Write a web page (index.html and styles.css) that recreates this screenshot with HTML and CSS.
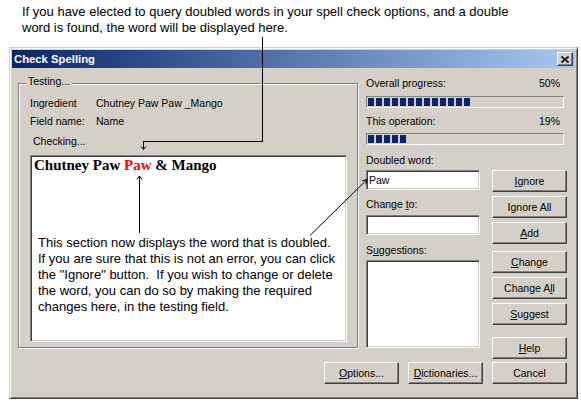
FILE: index.html
```html
<!DOCTYPE html>
<html>
<head>
<meta charset="utf-8">
<title>Check Spelling</title>
<link rel="stylesheet" href="styles.css">
</head>
<body>
<div class="page">
  <p class="note-top">If you have elected to query doubled words in your spell check options, and a double<br>word is found, the word will be displayed here.</p>

  <div class="dialog">
    <div class="titlebar">
      <span class="title">Check Spelling</span>
      <span class="close"><svg width="8" height="7" viewBox="0 0 8 7"><path d="M0.5 0.5 L7.5 6.5 M7.5 0.5 L0.5 6.5" stroke="#000" stroke-width="1.6" fill="none"/></svg></span>
    </div>
    <div class="body">
      <div class="main">
        <div class="group">
          <span class="group-label">Testing...</span>
          <div class="info"><span class="k">Ingredient</span><span>Chutney Paw Paw _Mango</span></div>
          <div class="info info2"><span class="k">Field name:</span><span>Name</span></div>
          <div class="checking">Checking...</div>
          <div class="testbox">
            <div class="phrase">Chutney Paw <span class="dup">Paw</span> &amp; Mango</div>
            <p class="note-box">This section now displays the word that is doubled.<br>If you are sure that this is not an error, you can click<br>the "Ignore" button.&nbsp; If you wish to change or delete<br>the word, you can do so by making the required<br>changes here, in the testing field.</p>
          </div>
        </div>

        <div class="right">
          <div class="row"><span>Overall progress:</span><span>50%</span></div>
          <div class="bar"><i></i><i></i><i></i><i></i><i></i><i></i><i></i><i></i><i></i><i></i><i></i><i></i><i></i></div>
          <div class="row row2"><span>This operation:</span><span>19%</span></div>
          <div class="bar bar2"><i></i><i></i><i></i><i></i><i></i></div>
          <div class="lower">
            <div class="fields">
              <div class="lbl">Doubled word:</div>
              <div class="field">Paw</div>
              <div class="lbl lbl-gap">Change <u>t</u>o:</div>
              <div class="field field2"></div>
              <div class="lbl lbl-gap2">S<u>u</u>ggestions:</div>
              <div class="list"></div>
            </div>
            <div class="btns">
              <button class="btn"><span><u>I</u>gnore</span></button>
              <button class="btn g4">I<u>g</u>nore All</button>
              <button class="btn g4"><span><u>A</u>dd</span></button>
              <button class="btn g7"><span><u>C</u>hange</span></button>
              <button class="btn g4">Change A<u>l</u>l</button>
              <button class="btn g4"><span><u>S</u>uggest</span></button>
              <button class="btn g12"><span><u>H</u>elp</span></button>
            </div>
          </div>
        </div>
      </div>
      <div class="bottom">
        <button class="btn"><span><u>O</u>ptions...</span></button>
        <button class="btn"><span><u>D</u>ictionaries...</span></button>
        <button class="btn">Cancel</button>
      </div>
    </div>
  </div>

  <svg class="arrows" width="581" height="403" viewBox="0 0 581 403">
    <g stroke="#000" stroke-width="1" fill="none">
      <polyline points="262.5,37 262.5,141.5 143.5,141.5 143.5,149.5" shape-rendering="crispEdges"/>
      <polyline points="141,146.5 143.5,149.5 146,146.5"/>
      <line x1="139.5" y1="233" x2="139.5" y2="176" shape-rendering="crispEdges"/>
      <polyline points="137,179.5 139.5,176 142,179.5"/>
      <line x1="310" y1="235.5" x2="367" y2="179.5"/>
      <polyline points="362.2,180.8 367,179.5 365.7,184.3"/>
    </g>
  </svg>
</div>
</body>
</html>
```

FILE: styles.css
```css
* { box-sizing: border-box; }
html, body { margin: 0; padding: 0; background: #fff; }
body {
  width: 581px;
  height: 403px;
  overflow: hidden;
  font-family: "Liberation Sans", Arial, sans-serif;
  color: #000;
}
.page { position: relative; width: 581px; height: 403px; }

.note-top {
  margin: 0;
  height: 36px;
  padding: 4px 0 0 22px;
  font-size: 13px;
  line-height: 16px;
}

.dialog {
  margin: 11px 0 0 9px;
  width: 569px;
  height: 352px;
  background: #d4d0c8;
  border: 1px solid;
  border-color: #d4d0c8 #404040 #404040 #d4d0c8;
  box-shadow: inset 1px 1px 0 #fff, inset -1px -1px 0 #808080;
  padding: 2px;
  display: flex;
  flex-direction: column;
  font-size: 10.5px;
  line-height: 13px;
}

.titlebar {
  height: 18px;
  flex: none;
  display: flex;
  align-items: center;
  justify-content: space-between;
  padding: 0 2px 0 2px;
  background: linear-gradient(to right, #0a246a, #a6caf0);
  color: #fff;
}
.title { font-weight: bold; font-size: 11.3px; }
.close {
  width: 16px;
  height: 14px;
  background: #d4d0c8;
  border: 1px solid;
  border-color: #fff #404040 #404040 #fff;
  box-shadow: inset -1px -1px 0 #808080;
  display: flex;
  align-items: center;
  justify-content: center;
}
.close svg { display: block; margin-left: -1px; }

.body { flex: 1; display: flex; flex-direction: column; }
.main { height: 291px; display: flex; flex: none; }

.group {
  position: relative;
  margin: 15px 0 0 6px;
  width: 340px;
  height: 265px;
  border: 1px solid #808080;
  box-shadow: 1px 1px 0 #fff, inset 1px 1px 0 #fff;
  padding: 13px 0 0 11px;
}
.group-label {
  position: absolute;
  left: 7px;
  top: -9px;
  padding: 0 2px;
  background: #d4d0c8;
}
.info { display: flex; }
.info .k { width: 66px; }
.info2 { margin-top: 5px; }
.checking { margin: 7px 0 0 3px; }

.testbox {
  margin-top: 7px;
  width: 317px;
  height: 187px;
  background: #fff;
  border: 1px solid;
  border-color: #808080 #fff #fff #808080;
  box-shadow: inset 1px 1px 0 #404040, inset -1px -1px 0 #d4d0c8;
  padding: 1px 0 0 3px;
}
.phrase {
  font-family: "Liberation Serif", "Times New Roman", serif;
  font-weight: bold;
  font-size: 15px;
  line-height: 16px;
}
.dup { color: #f00; }
.note-box {
  margin: 62px 0 0 4px;
  font-size: 13px;
  line-height: 16px;
}

.right { margin: 9px 0 0 8px; width: 201px; }
.row { display: flex; justify-content: space-between; width: 194px; }
.row2 { margin-top: 7px; }
.bar {
  margin-top: 6px;
  width: 198px;
  height: 12px;
  border: 1px solid;
  border-color: #808080 #fff #fff #808080;
  padding: 1px;
  display: flex;
  gap: 2px;
}
.bar2 { margin-top: 5px; }
.bar i { display: block; width: 6px; height: 8px; background: #0a246a; }

.lower { display: flex; gap: 12px; margin-top: 9px; }
.fields { width: 114px; }
.field {
  margin-top: 3px;
  height: 20px;
  background: #fff;
  border: 1px solid;
  border-color: #808080 #fff #fff #808080;
  box-shadow: inset 1px 1px 0 #404040, inset -1px -1px 0 #d4d0c8;
  padding: 3px 0 0 2px;
}
.lbl-gap { margin-top: 8px; }
.field2 { margin-top: 4px; }
.lbl-gap2 { margin-top: 9px; }
.list {
  margin-top: 3px;
  height: 88px;
  background: #fff;
  border: 1px solid;
  border-color: #808080 #fff #fff #808080;
  box-shadow: inset 1px 1px 0 #404040, inset -1px -1px 0 #d4d0c8;
}

.btns { width: 75px; padding-top: 16px; display: flex; flex-direction: column; }
.btn {
  width: 75px;
  height: 22px;
  flex: none;
  background: #d4d0c8;
  border: 1px solid;
  border-color: #fff #404040 #404040 #fff;
  box-shadow: inset -1px -1px 0 #808080;
  display: flex;
  align-items: center;
  justify-content: center;
  padding: 0;
  margin: 0;
  font: inherit;
  color: #000;
}
.g4 { margin-top: 4px; }
.g7 { margin-top: 7px; }
.g12 { margin-top: 12px; }

.bottom {
  display: flex;
  justify-content: flex-end;
  gap: 9px;
  margin-top: 3px;
  padding-right: 8px;
}

.arrows { position: absolute; left: 0; top: 0; pointer-events: none; }
```
